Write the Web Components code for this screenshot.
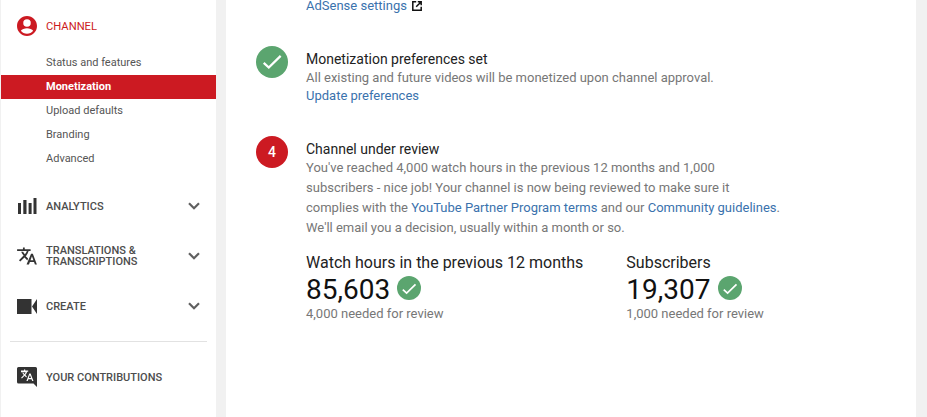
<!DOCTYPE html>
<html>
<head>
<meta charset="utf-8">
<title>Monetization</title>
<style>
  html, body { margin: 0; height: 417px; overflow: hidden; background: #f1f1f1; font-family: Roboto, "Liberation Sans", sans-serif; }
  studio-page { height: 417px; }
</style>
</head>
<body>
<studio-page>
  <studio-nav slot="nav"></studio-nav>
  <main-panel slot="main"></main-panel>
</studio-page>

<script>
const ICONS = {
  account: '<svg width="20" height="20" viewBox="1.6 1.6 20.8 20.8" fill="#cc1a22"><path d="M12 1.600C6.250 1.600 1.600 6.250 1.600 12S6.250 22.400 12 22.400 22.400 17.750 22.400 12 17.750 1.600 12 1.600zm0 3.400a3.900 3.900 0 1 1 0 7.800 3.900 3.900 0 0 1 0-7.800zm0 15c-2.600 0-5-1.100-6.400-3 .9-1.700 3.900-2.600 6.400-2.600s5.500.9 6.400 2.600C17 18.900 14.600 20 12 20z"/></svg>',
  bars: '<svg width="20" height="16" viewBox="0 0 20 16" fill="#333"><path d="M1 5h3v11H1zM6.300 2h3.200v14H6.300zM11.600 5h3v11h-3zM16.500 0H19.500v16h-3z"/></svg>',
  translate: '<svg width="20" height="18" viewBox="0 0 22 20" fill="#333"><path d="M0 2.500h6.500V.500h2v2H15v2h-2.200c-.7 2.300-1.800 4.200-3.200 5.800l2.600 2.600-.8 2-3.200-3.200L3.500 16l-1.400-1.400 5.100-5.100C6.100 8.200 5.200 6.700 4.500 5.200h2.200c.5 1 1.100 2 1.900 2.900 1-1.100 1.800-2.300 2.200-3.600H0z"/><path d="M15.500 7.500h2l4.500 12h-2.200l-1-2.800h-4.600l-1 2.800H10.500zm-.6 7.300h3.200l-1.600-4.500z"/></svg>',
  video: '<svg width="20" height="15" viewBox="0 0 20 15" fill="#333"><path d="M0 0h14.500v15H0zM20 0v15l-5-7.500z"/></svg>',
  contrib: '<svg width="20" height="20" viewBox="0 0 20 20"><path fill="#333" d="M1.500 0h17A1.500 1.500 0 0 1 20 1.500V20l-3.500-3.500h-15A1.500 1.500 0 0 1 0 15V1.500A1.500 1.500 0 0 1 1.500 0z"/><path fill="#fff" d="M4 3.500h3V2.500h1.200v1h3v1.200h-1c-.4 1.200-1 2.300-1.800 3.200l1.400 1.400-.5 1.200-1.700-1.700-2.700 2.700-.8-.8 2.700-2.700c-.6-.7-1.100-1.500-1.500-2.300h1.200c.3.500.6 1 1 1.500.5-.6.900-1.300 1.200-2H4z"/><path fill="#fff" d="M12.300 6.500h1.300l2.900 7.500h-1.300l-.7-1.800h-3.100l-.7 1.800H9.400zm-.5 4.600h2.300l-1.150-3.100z"/></svg>',
  chevron: '<svg width="12" height="8" viewBox="0 0 12 8" fill="none" stroke="#606060" stroke-width="2.2"><path d="M1 1.200l5 5 5-5"/></svg>',
  open: '<svg width="10" height="10" viewBox="0 0 10 10" fill="none" stroke="#111" stroke-width="1.5"><path d="M4.200 .8H.8v8.400h8.400V5.800"/><path d="M5.800 .8h3.400v3.400M9 1L4.200 5.800"/></svg>',
  check: '<svg viewBox="0 0 24 24" width="100%" height="100%" fill="none" stroke="#fff" stroke-width="1.7"><path d="M5.800 12.600l3.800 3.500 8.900-8.700"/></svg>'
}

class StudioPage extends HTMLElement {
  constructor() {
    super()
    this.attachShadow({ mode: 'open' })
    this.shadowRoot.innerHTML = `
      <style>
        :host { display: grid; grid-template-columns: 215px 690px; column-gap: 10px; padding-left: 1px; }
        ::slotted(*) { height: 417px; background: #fff; }
      </style>
      <slot name="nav"></slot>
      <slot name="main"></slot>
    `
  }
}

class NavRow extends HTMLElement {
  constructor() {
    super()
    this.attachShadow({ mode: 'open' })
  }
  connectedCallback() {
    const icon = ICONS[this.getAttribute('icon')]
    const more = this.hasAttribute('more') ? ICONS.chevron : ''
    this.shadowRoot.innerHTML = `
      <style>
        :host { display: flex; align-items: center; height: 50px; padding: 0 16px; box-sizing: border-box; color: #4d4d4d; font-size: 11px; line-height: 11px; text-transform: uppercase; font-weight: 500; }
        :host([active]) { color: #cc1a22; font-weight: 400; font-size: 11.2px; }
        .icon { width: 29px; display: flex; }
        .label { flex: 1; }
        .more { display: flex; width: 12px; }
      </style>
      <span class="icon">${icon}</span>
      <span class="label"><slot></slot></span>
      <span class="more">${more}</span>
    `
  }
}

class NavSub extends HTMLElement {
  constructor() {
    super()
    this.attachShadow({ mode: 'open' })
    this.shadowRoot.innerHTML = `
      <style>
        :host { display: block; height: 24px; line-height: 24px; padding-left: 45px; font-size: 11px; color: #555; }
        :host([selected]) { background: #cc1a22; color: #fff; font-weight: 700; }
      </style>
      <slot></slot>
    `
  }
}

class StudioNav extends HTMLElement {
  constructor() {
    super()
    this.attachShadow({ mode: 'open' })
    this.shadowRoot.innerHTML = `
      <style>
        :host { display: block; }
        .top { padding-top: 1px; }
        .sub { margin-bottom: 10px; }
        hr { margin: 10px 9px; border: 0; border-top: 1px solid #e2e2e2; }
      </style>
      <div class="top"><nav-row icon="account" active>Channel</nav-row></div>
      <div class="sub">
        <nav-sub>Status and features</nav-sub>
        <nav-sub selected>Monetization</nav-sub>
        <nav-sub>Upload defaults</nav-sub>
        <nav-sub>Branding</nav-sub>
        <nav-sub>Advanced</nav-sub>
      </div>
      <nav-row icon="bars" more>Analytics</nav-row>
      <nav-row icon="translate" more>Translations &amp;<br>Transcriptions</nav-row>
      <nav-row icon="video" more>Create</nav-row>
      <hr>
      <nav-row icon="contrib">Your contributions</nav-row>
    `
  }
}

class StepBlock extends HTMLElement {
  constructor() {
    super()
    this.attachShadow({ mode: 'open' })
  }
  connectedCallback() {
    const done = this.hasAttribute('done')
    this.shadowRoot.innerHTML = `
      <style>
        :host { display: grid; grid-template-columns: 32px 1fr; column-gap: 18px; padding-left: 30px; color: #777; font-size: 13px; line-height: 20px; }
        :host([done]) { line-height: 18px; }
        .badge { width: 32px; height: 32px; border-radius: 50%; color: #fff; font-size: 14px; font-weight: 500; display: flex; align-items: center; justify-content: center; background: ${done ? '#5ba56f' : '#cc1a22'}; }
        .title { color: #222; font-size: 14px; line-height: 20px; margin: 3px 0 ${done ? '0' : '-1px'}; }
        ::slotted(a) { color: #3a72ad; text-decoration: none; }
      </style>
      <div class="badge">${done ? ICONS.check : this.getAttribute('num')}</div>
      <div>
        <div class="title">${this.getAttribute('title')}</div>
        <slot></slot>
      </div>
    `
  }
}

class StatBox extends HTMLElement {
  constructor() {
    super()
    this.attachShadow({ mode: 'open' })
  }
  connectedCallback() {
    this.shadowRoot.innerHTML = `
      <style>
        :host { display: block; }
        .label { color: #222; font-size: 16px; line-height: 20px; }
        .value { display: flex; align-items: center; gap: 7px; color: #111; font-size: 28px; line-height: 32px; margin-top: 1px; }
        .tick { width: 24px; height: 24px; border-radius: 50%; background: #5ba56f; margin-top: -4px; }
        .need { color: #777; font-size: 13px; line-height: 18px; margin-top: -1px; }
      </style>
      <div class="label">${this.getAttribute('label')}</div>
      <div class="value">${this.getAttribute('value')}<span class="tick">${ICONS.check}</span></div>
      <div class="need">${this.getAttribute('need')}</div>
    `
  }
}

class MainPanel extends HTMLElement {
  constructor() {
    super()
    this.attachShadow({ mode: 'open' })
    this.shadowRoot.innerHTML = `
      <style>
        :host { display: block; overflow: hidden; font-size: 13px; }
        a { color: #3a72ad; text-decoration: none; }
        .adsense { display: flex; align-items: center; gap: 5px; height: 12px; line-height: 12px; margin: 0 0 34px 80px; }
        .adsense span { display: flex; }
        step-block[done] { margin-bottom: 31px; }
        .stats { display: flex; gap: 43px; margin-top: 15px; }
      </style>
      <div class="adsense"><a href="#">AdSense settings</a><span>${ICONS.open}</span></div>
      <step-block done title="Monetization preferences set">
        All existing and future videos will be monetized upon channel approval.<br>
        <a href="#">Update preferences</a>
      </step-block>
      <step-block num="4" title="Channel under review">
        You've reached 4,000 watch hours in the previous 12 months and 1,000<br>
        subscribers - nice job! Your channel is now being reviewed to make sure it<br>
        complies with the <a href="#">YouTube Partner Program terms</a> and our <a href="#">Community guidelines</a>.<br>
        We'll email you a decision, usually within a month or so.
        <div class="stats">
          <stat-box label="Watch hours in the previous 12 months" value="85,603" need="4,000 needed for review"></stat-box>
          <stat-box label="Subscribers" value="19,307" need="1,000 needed for review"></stat-box>
        </div>
      </step-block>
    `
  }
}

customElements.define('nav-row', NavRow)
customElements.define('nav-sub', NavSub)
customElements.define('studio-nav', StudioNav)
customElements.define('step-block', StepBlock)
customElements.define('stat-box', StatBox)
customElements.define('main-panel', MainPanel)
customElements.define('studio-page', StudioPage)
</script>
</body>
</html>
